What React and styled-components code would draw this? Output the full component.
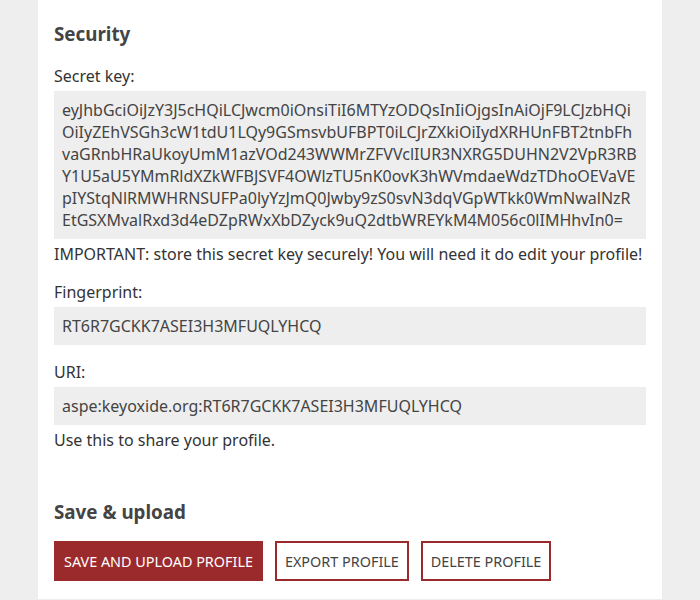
import React from "react";
import styled, { createGlobalStyle } from "styled-components";

const GlobalStyle = createGlobalStyle`
  body {
    margin: 0;
    background: #eeeeee;
    font-family: "Noto Sans", "Open Sans", sans-serif;
    color: #333;
  }
`;

const Page = styled.div`
  padding: 0 38px;
`;

const Card = styled.section`
  background: #fff;
  padding: 19px 16px 18px;
`;

const Heading = styled.h2`
  font-size: 18.8px;
  font-weight: 700;
  line-height: 30px;
  color: #444;
  margin: ${(p) => p.top || 0}px 0 ${(p) => p.gap || 0}px;
`;

const Label = styled.p`
  font-size: 16px;
  line-height: 22px;
  margin: 0 0 4px;
`;

const Note = styled.p`
  font-size: 16px;
  line-height: 22px;
  margin: 4px 0 16px;
`;

const Code = styled.div`
  background: #eeeeee;
  padding: 8px;
  font-size: 16px;
  line-height: 22px;
  color: #444;
  word-break: break-all;
  margin-bottom: ${(p) => p.mb || 0}px;
`;

const Buttons = styled.div`
  display: flex;
  gap: 12px;
`;

const Button = styled.button`
  font-family: inherit;
  font-size: 14.4px;
  text-transform: uppercase;
  height: 40px;
  padding: 0 8px;
  border: 2px solid #9b2a2c;
  background: ${(p) => (p.primary ? "#9b2a2c" : "#fff")};
  color: ${(p) => (p.primary ? "#fff" : "#444")};
  cursor: pointer;
`;

const secretKey =
  "eyJhbGciOiJzY3J5cHQiLCJwcm0iOnsiTiI6MTYzODQsInIiOjgsInAiOjF9LCJzbHQiOiIyZEhVSGh3cW1tdU1LQy9GSmsvbUFBPT0iLCJrZXkiOiIydXRHUnFBT2tnbFhvaGRnbHRaUkoyUmM1azVOd243WWMrZFVVclIUR3NXRG5DUHN2V2VpR3RBY1U5aU5YMmRldXZkWFBJSVF4OWlzTU5nK0ovK3hWVmdaeWdzTDhoOEVaVEpIYStqNlRMWHRNSUFPa0lyYzJmQ0Jwby9zS0svN3dqVGpWTkk0WmNwalNzREtGSXMvalRxd3d4eDZpRWxXbDZyck9uQ2dtbWREYkM4M056c0lIMHhvIn0=";

export default function App() {
  return (
    <Page>
      <GlobalStyle />
      <Card>
        <Heading gap={16}>Security</Heading>
        <Label>Secret key:</Label>
        <Code>{secretKey}</Code>
        <Note>IMPORTANT: store this secret key securely! You will need it do edit your profile!</Note>
        <Label>Fingerprint:</Label>
        <Code mb={16}>RT6R7GCKK7ASEI3H3MFUQLYHCQ</Code>
        <Label>URI:</Label>
        <Code>aspe:keyoxide.org:RT6R7GCKK7ASEI3H3MFUQLYHCQ</Code>
        <Note>Use this to share your profile.</Note>
        <Heading top={46} gap={14}>Save &amp; upload</Heading>
        <Buttons>
          <Button primary>Save and upload profile</Button>
          <Button>Export profile</Button>
          <Button>Delete profile</Button>
        </Buttons>
      </Card>
    </Page>
  );
}
